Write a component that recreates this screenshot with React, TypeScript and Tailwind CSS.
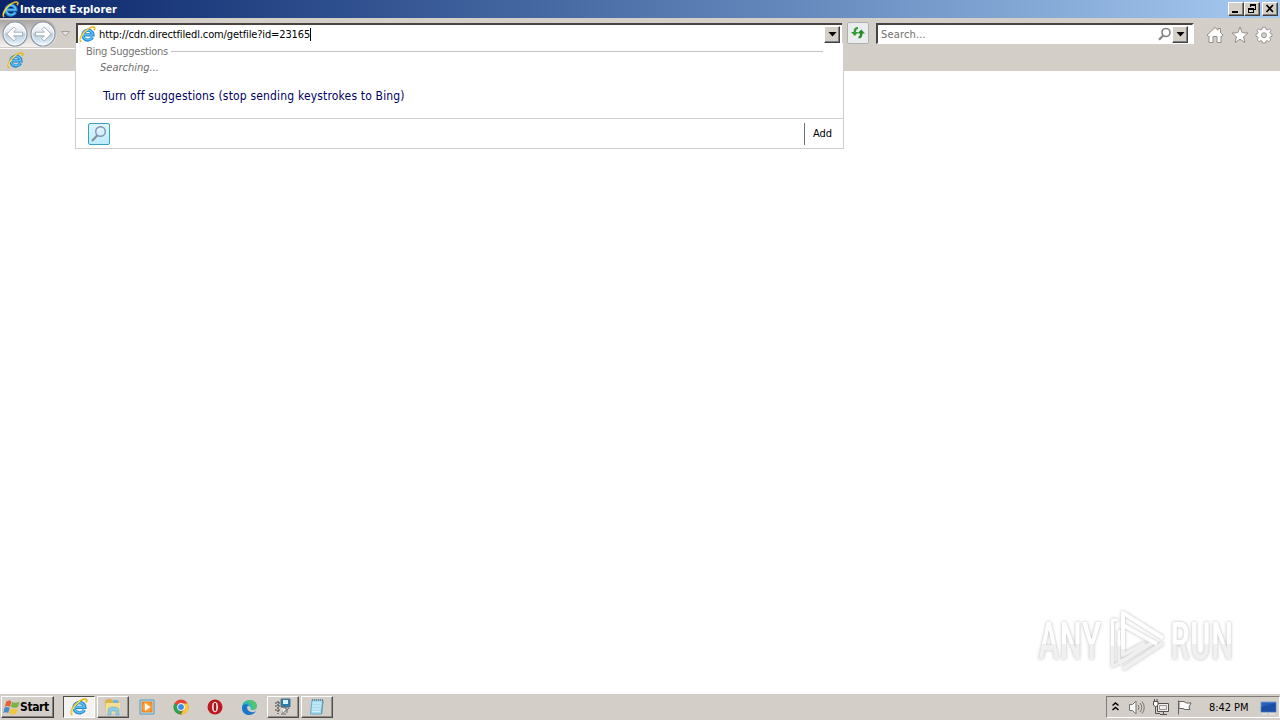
import type { ReactNode } from 'react';

function IeIcon({ size = 17 }: { size?: number }) {
  return (
    <svg width={size} height={size} viewBox="0 0 17 17" className="block shrink-0">
      <path d="M13.500 11.300A5.100 4.900 0 1 1 14 8.900H5.200" fill="none" stroke="#1f86cf" strokeWidth="3.200" />
      <path d="M13.200 11.300A4.900 4.700 0 1 1 13.800 8.700H5" fill="none" stroke="#5cbdf0" strokeWidth="1.600" />
      <path d="M2 16C-.3 13.500 3 7.500 7.300 4.200C11 1.200 15 .2 15.700 1.700C16 2.500 15.600 3.500 15 4.300" fill="none" stroke="#e5b91f" strokeWidth="1.700" />
      <path d="M1.400 14C2 10 6 5.200 9.500 3.100" fill="none" stroke="#fff08a" strokeWidth=".8" />
    </svg>
  );
}

function RoundArrow({ flip }: { flip?: boolean }) {
  return (
    <svg width="26" height="26" viewBox="0 0 26 26" className="block shrink-0">
      <defs>
        <linearGradient id={flip ? 'discF' : 'discB'} x1="0" y1="0" x2="0" y2="1">
          <stop offset="0" stopColor="#ffffff" />
          <stop offset=".42" stopColor="#e6ebf0" />
          <stop offset=".5" stopColor="#bccbda" />
          <stop offset=".8" stopColor="#d4e6f2" />
          <stop offset="1" stopColor="#f0fcff" />
        </linearGradient>
      </defs>
      <circle cx="13" cy="13" r="12" fill={flip ? 'url(#discF)' : 'url(#discB)'} stroke="#8b98a6" strokeWidth="1.200" />
      <circle cx="13" cy="13" r="10.800" fill="none" stroke="#fff" strokeOpacity=".7" />
      <path
        transform={flip ? 'matrix(-1 0 0 1 26 0)' : undefined}
        d="M4.800 13L11.800 6L14.200 8.400L11.600 11.200H20.500V14.800H11.600L14.200 17.600L11.800 20Z"
        fill="#fff" stroke="#93a1b0" strokeWidth=".8"
      />
    </svg>
  );
}

function DropButton() {
  return (
    <div className="flex h-[17px] w-[16px] shrink-0 items-center justify-center border border-t-white border-l-white border-r-[#404040] border-b-[#404040] bg-[#d4d0c8] shadow-[inset_-1px_-1px_0_#808080]">
      <svg width="9" height="5" viewBox="0 0 9 5"><path d="M.5 0H8.500L4.500 4.500Z" fill="#000" /></svg>
    </div>
  );
}

function WindowButton({ children }: { children: ReactNode }) {
  return (
    <div className="flex h-[14px] w-[16px] items-center justify-center border border-t-white border-l-white border-r-[#404040] border-b-[#404040] bg-[#d4d0c8] shadow-[inset_-1px_-1px_0_#808080]">
      {children}
    </div>
  );
}

function TitleBar() {
  return (
    <header className="flex h-[18px] shrink-0 items-center bg-linear-to-r from-[#0a246a] to-[#a6caf0] pr-[2px] pl-[2px]">
      <IeIcon />
      <span className="ml-[1px] text-[11px] leading-[17px] font-bold tracking-[0.07px] whitespace-nowrap text-white">Internet Explorer</span>
      <div className="ml-auto flex">
        <WindowButton>
          <svg width="12" height="10"><path d="M2 7H8V9H2Z" /></svg>
        </WindowButton>
        <WindowButton>
          <svg width="12" height="10" fill="none" stroke="#000" shapeRendering="crispEdges">
            <path d="M4.500 3V.5H9.500V5.500H8M4 1.500H10M2.500 4.500H7.500V8.500H2.500ZM2 5.500H8" />
          </svg>
        </WindowButton>
        <div className="ml-[2px]">
          <WindowButton>
            <svg width="12" height="10"><path d="M2.500 1L9 8M9 1L2.500 8" stroke="#000" strokeWidth="1.700" /></svg>
          </WindowButton>
        </div>
      </div>
    </header>
  );
}

function SuggestionsPanel() {
  return (
    <div className="absolute top-[43px] left-[75px] z-10 flex h-[106px] w-[769px] flex-col border border-t-0 border-[#cfcfcf] bg-white">
      <div className="mt-[1px] ml-[10px] flex h-[15px] items-center">
        <span className="w-[85px] text-[11px] leading-[15px] tracking-[-0.23px] whitespace-nowrap text-[#747474]">Bing Suggestions</span>
        <span className="h-px w-[652px] bg-[#c4c4c4]" />
      </div>
      <span className="mt-[1px] ml-[24px] text-[11px] leading-[16px] text-[#6d6d6d] italic">Searching...</span>
      <span className="mt-[11px] ml-[27px] text-[12px] leading-[18px] tracking-[0.17px] whitespace-nowrap text-[#00005f]">Turn off suggestions (stop sending keystrokes to Bing)</span>
      <div className="mt-auto flex h-[30px] items-center border-t border-[#d0d0d0] pl-[12px]">
        <div className="flex h-[22px] w-[22px] items-center justify-center rounded-[2px] border border-[#399fbd] bg-linear-to-b from-[#def5ff] to-[#bcecff]">
          <svg width="18" height="18" viewBox="0 0 18 18">
            <path d="M2 16L7.200 10.500" stroke="#8a8f9c" strokeWidth="2.200" />
            <circle cx="10.500" cy="6.500" r="4.800" fill="#d6efff" stroke="#8194b0" strokeWidth="1.400" />
            <path d="M8 6A3 3 0 0 1 11 3.800" fill="none" stroke="#fff" />
          </svg>
        </div>
        <span className="ml-auto h-[22px] w-px bg-[#6e6e6e]" />
        <span className="w-[38px] pt-[1px] pl-[8px] text-[11px] text-black">Add</span>
      </div>
    </div>
  );
}

function Toolbar() {
  return (
    <div className="h-[53px] shrink-0 bg-[#d4cec8]">
      <div className="flex h-[30px] items-start">
        <div className="mt-[2px] flex h-[27px] w-[57px] items-center gap-[2px] rounded-r-[14px] bg-linear-to-b from-[#a9a5a2] via-[#d4d0cd] to-[#f4f2f0] pl-[2px]">
          <RoundArrow />
          <RoundArrow flip />
        </div>
        <svg width="9" height="6" viewBox="0 0 9 6" className="mt-[13px] ml-[4px]">
          <path d="M.5 .5H8.500L4.500 5Z" fill="#e6e2de" stroke="#a5a09c" />
        </svg>
        <div className="mt-[5px] ml-[6px] flex h-[20px] w-[766px] items-center border-t-2 border-l-2 border-[#494440] bg-white pr-[2px] pl-[1px]">
          <IeIcon />
          <span className="ml-[3px] text-[11px] leading-[17px] tracking-[-0.13px] whitespace-nowrap text-black">http://cdn.directfiledl.com/getfile?id=23165</span>
          <span className="h-[13px] w-px bg-black" />
          <div className="ml-auto"><DropButton /></div>
        </div>
        <div className="mt-[4px] ml-[5px] flex h-[22px] w-[22px] items-center justify-center rounded-[2px] border border-[#aeb0b0] bg-[#e9edee]">
          <svg width="16" height="16" viewBox="0 0 16 16">
            <path d="M1 7H3.500Q3.500 2 8 2V4Q6 4 6 7H8.500L4.700 11Z" fill="#379b36" />
            <path d="M7.500 8.500L11.300 4.500L15 8.500H12.500Q12.500 13.500 8.500 13.500V11.500Q10 11.500 10 8.500Z" fill="#278c28" />
          </svg>
        </div>
        <div className="mt-[5px] ml-[7px] flex h-[21px] w-[318px] items-center border-t-2 border-r-2 border-b border-l-2 border-t-[#494440] border-r-white border-b-white border-l-[#494440] bg-white pr-[4px] pl-[3px]">
          <span className="text-[11px] leading-[17px] tracking-[0.17px] text-[#707070]">Search...</span>
          <svg width="15" height="15" viewBox="0 0 15 15" className="ml-auto" fill="none" stroke="#878787">
            <circle cx="9" cy="5.500" r="4" strokeWidth="1.700" /><path d="M6.200 8.500L2 12.700" strokeWidth="2.300" />
          </svg>
          <DropButton />
        </div>
        <div className="mt-[8px] ml-[12px] flex gap-[7px]">
          <svg width="18" height="18" viewBox="0 0 18 18">
            <path d="M1 9L9 1.500L12 4.200V2.500H14.500V6.600L17 9L15.800 10.500L15 9.900V16.500H11V10.500H7V16.500H3V9.900L2.200 10.500Z" fill="#fff" stroke="#938e8a" />
          </svg>
          <svg width="18" height="18" viewBox="0 0 18 18">
            <path d="M9 1L11.200 6.700L17 7L12.500 10.800L14 16.500L9 13.300L4 16.500L5.500 10.800L1 7L6.800 6.700Z" fill="#fff" stroke="#938e8a" />
          </svg>
          <svg width="18" height="18" viewBox="0 0 18 18" className="-ml-px">
            <path fillRule="evenodd" d="M7.500 1.300H10.500L11 3.400L12.400 4L14.300 2.800L16 4.700L14.800 6.500L15.300 7.600L17 8V10.400L15.300 10.800L14.700 12L15.800 13.900L13.900 15.700L12.100 14.500L11 15L10.500 17H7.500L7 15L5.900 14.500L4.100 15.700L2.200 13.900L3.300 12L2.700 10.800L1 10.400V8L2.700 7.600L3.200 6.500L2 4.700L3.700 2.800L5.600 4L7 3.400ZM9 6.700A2.500 2.500 0 1 0 9 11.700A2.500 2.500 0 1 0 9 6.700Z" fill="#fff" stroke="#938e8a" strokeWidth=".9" />
          </svg>
        </div>
      </div>
      <div className="flex h-[23px]">
        <div className="flex w-[75px] items-center border-t border-white pl-[7px]"><IeIcon /></div>
      </div>
    </div>
  );
}

function Watermark() {
  return (
    <div className="absolute right-[45px] bottom-[20px] flex h-[62px] w-[197px] items-center justify-between font-['Roboto','Liberation_Sans',sans-serif] text-[51px] leading-[62px] font-medium [filter:drop-shadow(0_0_1.5px_#b8b8b8)]">
      <span className="w-[65px] origin-left scale-x-[0.72] text-transparent">
        <span className="-mr-[30px] inline-block bg-linear-to-b from-white from-53% to-[#f0f0f0] to-53% bg-clip-text">ANY</span>
      </span>
      <svg width="60" height="62" viewBox="0 0 60 62" className="-mt-[2px] shrink-0" fill="none" strokeWidth="4" strokeLinejoin="round">
        <g stroke="#f0f0f0">
          <path d="M5.500 30V56L12 53V30" strokeWidth="3" />
          <path d="M12 53L48 31M16 59L56 33M16 30V45L38 33" />
        </g>
        <path d="M11 10H5.500V36M12 20V36" stroke="#fff" strokeWidth="3" />
        <path d="M16 39V3L56 28M16 15L50 34" stroke="#fff" />
      </svg>
      <span className="w-[65px] origin-left scale-x-[0.72] text-transparent">
        <span className="-mr-[30px] inline-block bg-linear-to-b from-white from-53% to-[#f0f0f0] to-53% bg-clip-text">RUN</span>
      </span>
    </div>
  );
}

function TaskSlot({ children, state = 'flat' }: { children: ReactNode; state?: 'flat' | 'raised' | 'active' }) {
  const look = {
    flat: 'border-transparent',
    raised: 'border-t-white border-l-white border-r-[#504c48] border-b-[#504c48] shadow-[inset_-1px_-1px_0_#95908c]',
    active: 'border-t-[#504c48] border-l-[#504c48] border-r-white border-b-white bg-[#f5f3f1]',
  }[state];
  return <div className={`flex h-[22px] w-[32px] shrink-0 items-center justify-center border ${look}`}>{children}</div>;
}

function Taskbar() {
  return (
    <footer className="flex h-[27px] shrink-0 items-start border-t border-white bg-[#d4cec8] pt-[2px] shadow-[0_-1px_0_#d4cec8]">
      <div className="ml-[1px] flex h-[22px] w-[53px] items-center border border-t-white border-l-white border-r-[#404040] border-b-[#404040] pl-[1px] shadow-[inset_-1px_-1px_0_#85807c]">
        <svg width="17" height="17" viewBox="0 0 17 17" className="shrink-0">
          <path d="M3.300 2.500Q6 .5 8.500 2.500L7 8Q4.500 6.200 1.800 8Z" fill="#e36335" />
          <path d="M9.300 3Q12 4.500 16.500 2.800L15 8Q11 9.500 7.800 8Z" fill="#77b448" />
          <path d="M1.500 8.700Q4 7.200 6.700 8.700L5.300 14Q3 12.300 .3 14Z" fill="#488bc9" />
          <path d="M7.600 9.200Q10 10.700 14.700 9L13.300 14.800Q9 16.200 6.200 14.600Z" fill="#f3c63f" />
        </svg>
        <span className="text-[12px] font-bold tracking-[-0.4px]">Start</span>
      </div>
      <div className="ml-[9px] flex gap-[2px]">
        <TaskSlot state="active"><IeIcon size={18} /></TaskSlot>
        <TaskSlot state="raised">
          <svg width="18" height="18" viewBox="0 0 18 18">
            <path d="M1 3L3 1H7L9 3H15V15H2Z" fill="#dfb24c" /><path d="M2 5H16V15H2Z" fill="#f7df92" />
            <path d="M9 2H14V5H9Z" fill="#73b7d5" /><path d="M4 17V12Q4 9 9.500 9T15 12V17H12V13H7V17Z" fill="#8fcbe4" stroke="#5ba5c8" strokeWidth=".5" />
          </svg>
        </TaskSlot>
        <TaskSlot>
          <svg width="16" height="16" viewBox="0 0 16 16">
            <path d="M1 1H15V15H1Z" fill="#b6dff0" stroke="#4f9cc6" /><path d="M2.500 2.500H13.500V13.500H2.500Z" fill="#f2851e" /><circle cx="8" cy="8" r="5" fill="#fb9b32" /><path d="M5.800 4L11.500 8L5.800 12Z" fill="#fff" />
          </svg>
        </TaskSlot>
        <TaskSlot>
          <svg width="16" height="16" viewBox="0 0 16 16">
            <circle cx="8" cy="8" r="7.500" fill="#e44236" /><path d="M1.500 4.300L8 8L8 15.500A7.500 7.500 0 0 1 1.500 4.300Z" fill="#2ba54c" /><path d="M8 4.500H14.700A7.500 7.500 0 0 1 8 15.500L11 9.700Z" fill="#f6c836" /><circle cx="8" cy="8" r="3.500" fill="#4286ed" stroke="#fff" />
          </svg>
        </TaskSlot>
        <TaskSlot>
          <svg width="16" height="16" viewBox="0 0 16 16"><circle cx="8" cy="8" r="7.500" fill="#bc1820" /><ellipse cx="8" cy="8" rx="3" ry="5.200" fill="#eee9e5" /><ellipse cx="8" cy="8" rx="1.300" ry="4.200" fill="#a9121b" /></svg>
        </TaskSlot>
        <TaskSlot>
          <svg width="17" height="17" viewBox="0 0 17 17">
            <path d="M1 9C1 3 5 1 9 1C14 1 16.500 5 15.700 8.500C15 11 11 11.500 9.500 10.200C11 7 6 6 3.500 8Z" fill="#32b7b1" />
            <path d="M1 9C1 5 5 4.800 8 6C5 7 5.500 12 10 13C12 13.500 14 12.700 15 11.900C12 18 1 17.500 1 9Z" fill="#1976c9" />
            <path d="M9 1C14 1 16.500 5 15.700 8.500C14 10.500 12 10.800 10.500 10.200C12.500 6 10 3.500 5 2Z" fill="#54c56f" />
          </svg>
        </TaskSlot>
        <TaskSlot state="raised">
          <svg width="18" height="18" viewBox="0 0 18 18">
            <path d="M7 1H16V9H7Z" fill="#247fae" stroke="#56707f" /><path d="M9 2H14V6H9Z" fill="#d4f0fc" />
            <path d="M1 5H7M4 3V16M1 8H7M1 12H7" stroke="#444" fill="none" strokeWidth="1.200" strokeDasharray="2 1" />
            <path d="M8 9H12V11H9V15L15 10M7 16H12M13 11V15" stroke="#666" fill="none" /><path d="M8 10L12 11L9 15Z" fill="#eee" />
          </svg>
        </TaskSlot>
        <TaskSlot state="raised">
          <svg width="18" height="18" viewBox="0 0 18 18">
            <path d="M4 2H15L13.500 16H2.500Z" fill="#a8dcee" stroke="#62aecb" /><path d="M4.500 5H13M4.200 8H12.700M4 11H12.500M3.800 13.500H12" stroke="#ddf7ff" strokeWidth=".8" /><path d="M4 2H15" stroke="#777" strokeWidth="1.500" strokeDasharray="1 1" /><path d="M15 3L13.500 16" stroke="#6197af" />
          </svg>
        </TaskSlot>
      </div>
      <div className="ml-auto flex h-[22px] w-[174px] items-center border border-t-[#807b77] border-l-[#807b77] border-r-white border-b-white pl-[5px]">
        <svg width="7" height="9" viewBox="0 0 7 9" className="-mt-[2px]" fill="none" stroke="#000" strokeWidth="1.500"><path d="M.5 3.500L3.500 1L6.500 3.500M.5 8L3.500 5.500L6.500 8" /></svg>
        <svg width="18" height="17" viewBox="0 0 18 17" className="ml-[9px]" fill="none" stroke="#77736f">
          <path d="M1.500 5.500H4.500L8 2V15L4.500 11.500H1.500Z" fill="#f7f7f7" /><path d="M10 6Q12 8.500 10 11M12 4Q15.500 8.500 12 13M14 2.500Q18.500 8.500 14 14.500" />
        </svg>
        <svg width="18" height="17" viewBox="0 0 18 17" className="ml-[7px]" fill="none" stroke="#55514e">
          <path d="M4.500 4.500H15.500V12.500H4.500Z" fill="#eee" /><path d="M6.500 6.500H13.500V10.500H6.500Z" stroke="#99938f" /><path d="M7 15.500H14M10.500 13V15M2.500 7V14.500H7" /><path d="M.5 2.500H5V6L2.500 8L.5 6Z" fill="#fff" /><path d="M1.500 0V3M4 0V3" />
        </svg>
        <svg width="17" height="17" viewBox="0 0 17 17" className="ml-[5px]" fill="none" stroke="#686460">
          <path d="M2.500 1.500V15.500M3 2.500H8L10.500 4H15L13 8L14 10.500H9L7 9.500H3Z" fill="#fafafa" />
        </svg>
        <span className="mt-[2px] ml-[16px] text-[11px] tracking-[-0.05px] whitespace-nowrap">8:42 PM</span>
        <svg width="17" height="15" viewBox="0 0 17 15" className="ml-auto mr-[2px]">
          <path d="M1 2H16V12H1Z" fill="#255ebb" stroke="#709bcb" /><path d="M1 7L16 3V12H1Z" fill="#123c92" opacity=".5" /><path d="M2 14H7M9 14H15" stroke="#e4edf4" />
        </svg>
      </div>
    </footer>
  );
}

export default function App() {
  return (
    <div className="relative flex h-[720px] w-[1280px] flex-col overflow-hidden bg-white font-['DejaVu_Sans_Condensed','DejaVu_Sans',sans-serif] [font-stretch:condensed]">
      <TitleBar />
      <Toolbar />
      <SuggestionsPanel />
      <main className="relative flex-1 bg-white"><Watermark /></main>
      <Taskbar />
    </div>
  );
}
